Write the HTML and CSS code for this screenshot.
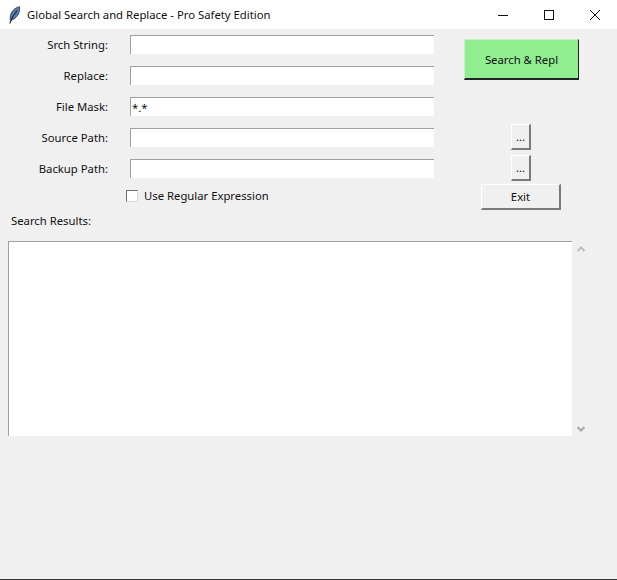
FILE: index.html
```html
<!DOCTYPE html>
<html lang="en">
<head>
    <meta charset="UTF-8">
    <title>Global Search and Replace - Pro Safety Edition</title>
    <link rel="stylesheet" href="styles.css">
</head>
<body>
    <header class="titlebar">
        <svg class="app-icon" width="14" height="18" viewBox="0 0 14 18">
            <path d="M12.500 .8C8 1.500 4.500 5 3.500 9.500c-.5 2.300-.3 3.800.2 4.800C7.500 13.500 11 10 12 6.500c.6-2 .8-4 .5-5.700z" fill="#5a7ba8" stroke="#1f3550" stroke-width=".8"/>
            <path d="M10 4.500C7.500 7.500 4.500 12 2.800 17.500" fill="none" stroke="#14233a" stroke-width="1.100"/>
        </svg>
        <span class="title">Global Search and Replace - Pro Safety Edition</span>
        <div class="window-controls">
            <svg width="12" height="12" viewBox="0 0 12 12"><path d="M1 6.500h10" stroke="#111" fill="none"/></svg>
            <svg width="12" height="12" viewBox="0 0 12 12"><rect x="1.500" y="1.500" width="9" height="9" stroke="#111" fill="none"/></svg>
            <svg width="12" height="12" viewBox="0 0 12 12"><path d="M1 1l10 10M11 1L1 11" stroke="#111" fill="none"/></svg>
        </div>
    </header>

    <main>
        <div class="top">
            <div class="form">
                <div class="row">
                    <label>Srch String:</label>
                    <input type="text" class="entry">
                </div>
                <div class="row">
                    <label>Replace:</label>
                    <input type="text" class="entry">
                </div>
                <div class="row">
                    <label>File Mask:</label>
                    <input type="text" class="entry" value="*.*">
                </div>
                <div class="row">
                    <label>Source Path:</label>
                    <input type="text" class="entry">
                </div>
                <div class="row">
                    <label>Backup Path:</label>
                    <input type="text" class="entry">
                </div>
                <div class="check-row">
                    <input type="checkbox" id="use-regex">
                    <label for="use-regex">Use Regular Expression</label>
                </div>
            </div>
            <div class="side">
                <button class="btn search-button">Search &amp; Repl</button>
                <button class="btn browse-button first">...</button>
                <button class="btn browse-button">...</button>
                <button class="btn exit-button">Exit</button>
            </div>
        </div>

        <div class="results-label">Search Results:</div>
        <div class="results">
            <textarea class="results-text"></textarea>
            <div class="scrollbar">
                <svg width="8" height="6" viewBox="0 0 8 6"><path d="M.5 5L4 1.500 7.500 5" stroke="#bdbdbd" stroke-width="2" fill="none"/></svg>
                <svg width="8" height="6" viewBox="0 0 8 6"><path d="M.5 1L4 4.500 7.500 1" stroke="#a8a8a8" stroke-width="2" fill="none"/></svg>
            </div>
        </div>
    </main>
</body>
</html>
```

FILE: styles.css
```css
html, body {
    margin: 0;
    padding: 0;
}

body {
    display: flex;
    flex-direction: column;
    box-sizing: border-box;
    height: 580px;
    overflow: hidden;
    font-family: "Noto Sans", "Open Sans", sans-serif;
    font-size: 11.3px;
    color: #111;
    background-color: #f0f0f0;
    border-bottom: 1px solid #333;
}

.titlebar {
    display: flex;
    align-items: center;
    flex: none;
    height: 29px;
    background-color: white;
}

.app-icon {
    margin-left: 7px;
}

.title {
    margin-left: 6px;
}

.window-controls {
    display: flex;
    gap: 34px;
    margin-left: auto;
    margin-right: 16px;
}

.top {
    display: flex;
    height: 183px;
}

.form {
    display: flex;
    flex-direction: column;
    gap: 12px;
    width: 434px;
    padding-top: 6px;
}

.row {
    display: flex;
    align-items: center;
    height: 19px;
}

.row label {
    width: 108px;
    text-align: right;
}

.entry {
    box-sizing: border-box;
    width: 304px;
    height: 19px;
    margin: 0 0 0 22px;
    padding: 0 1px;
    font: inherit;
    color: #111;
    background-color: white;
    border: none;
    border-top: 1px solid #a0a0a0;
    border-left: 1px solid #a0a0a0;
    border-radius: 0;
    outline: none;
}

.check-row {
    display: flex;
    align-items: center;
    gap: 6px;
    margin-top: -2px;
    padding-left: 126px;
}

.check-row input {
    appearance: none;
    box-sizing: border-box;
    width: 12px;
    height: 12px;
    margin: 0;
    background-color: white;
    border: 1px solid;
    border-color: #6e6e6e #d8d8d8 #d8d8d8 #6e6e6e;
    border-radius: 0;
}

.side {
    display: flex;
    flex-direction: column;
    align-items: center;
    width: 115px;
    margin-left: 30px;
    padding-top: 10px;
}

.btn {
    box-sizing: border-box;
    padding: 0;
    font: inherit;
    color: #111;
    background-color: #f0f0f0;
    border: 1px solid;
    border-color: white #7a7a7a #7a7a7a white;
    border-radius: 0;
}

.search-button {
    width: 115px;
    height: 41px;
    background-color: #90ee90;
    border-color: #c4f5c4 #222 #222 #c4f5c4;
    border-bottom-width: 2px;
}

.browse-button {
    width: 20px;
    height: 26px;
    margin-top: 5px;
    margin-right: 1px;
    border-right-width: 2px;
    border-bottom-width: 2px;
}

.browse-button.first {
    margin-top: 44px;
}

.exit-button {
    width: 80px;
    height: 26px;
    margin-top: 3px;
    margin-right: 1px;
    border-right-width: 2px;
    border-bottom-width: 2px;
}

.results-label {
    height: 29px;
    padding-left: 11px;
    line-height: 18px;
}

.results {
    display: flex;
    height: 195px;
    padding-left: 8px;
}

.results-text {
    box-sizing: border-box;
    width: 564px;
    height: 195px;
    margin: 0;
    padding: 1px;
    font: inherit;
    background-color: white;
    border: none;
    border-top: 1px solid #a0a0a0;
    border-left: 1px solid #a0a0a0;
    border-radius: 0;
    outline: none;
    resize: none;
}

.scrollbar {
    display: flex;
    flex-direction: column;
    justify-content: space-between;
    align-items: center;
    box-sizing: border-box;
    width: 17px;
    padding: 5px 0 4px;
}
```
